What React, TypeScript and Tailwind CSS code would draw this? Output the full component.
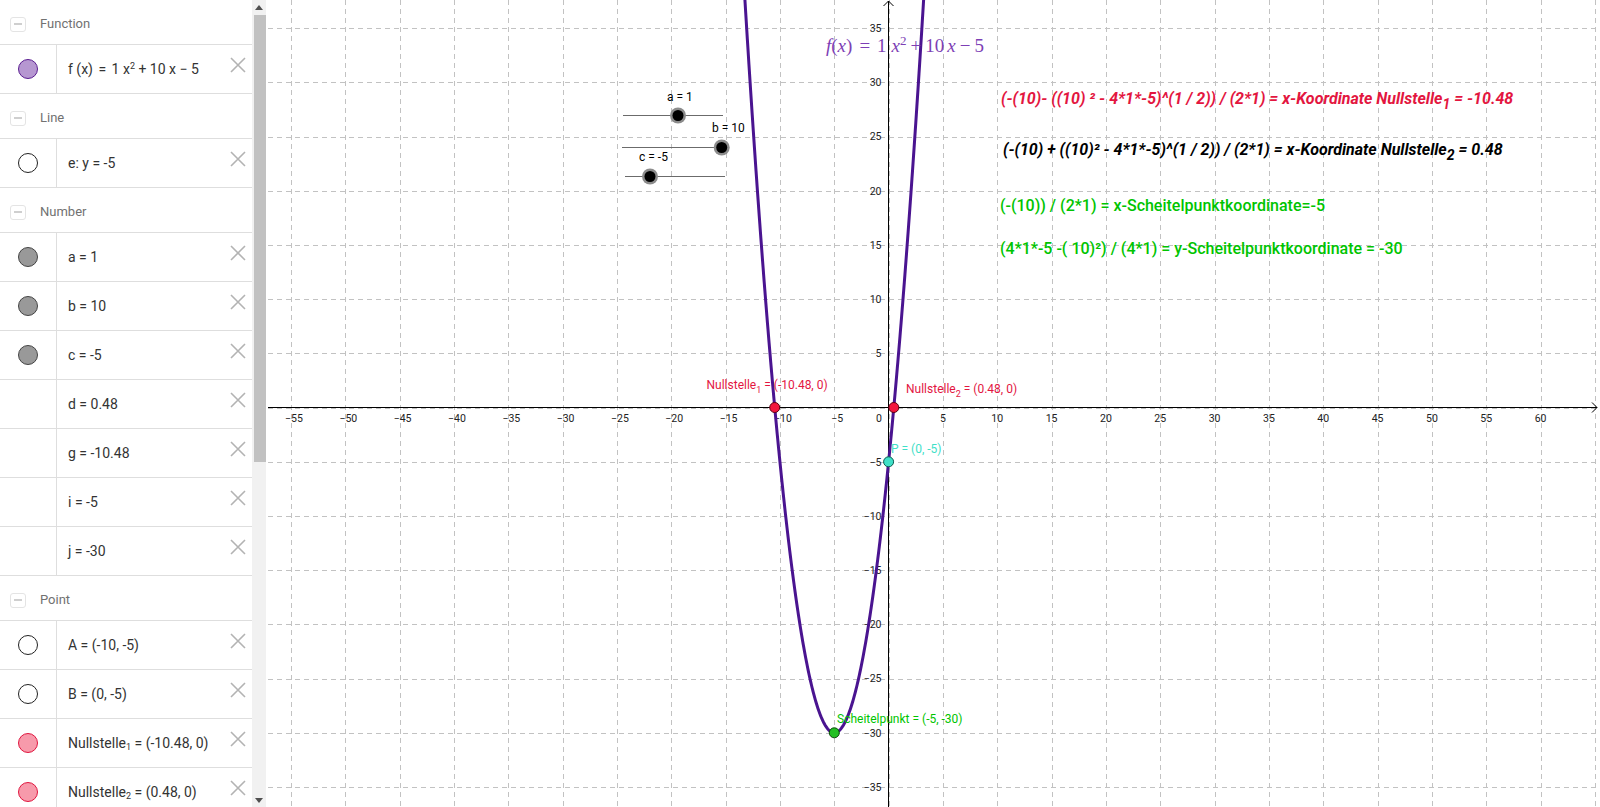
import React from "react";

// graph coordinate system (page pixels)
const OX = 888.6;
const OY = 407.6;
const SX = 10.866;
const SY = 10.84;
const px = (x: number) => OX + x * SX;
const py = (y: number) => OY - y * SY;

const minus = (n: number) => (n < 0 ? "\u2212" + Math.abs(n) : String(n));

type Dot = { fill: string; stroke: string } | null;
type Item =
  | { kind: "header"; label: string }
  | { kind: "row"; dot: Dot; content: React.ReactNode };

const purple = { fill: "#b697d1", stroke: "#5b1e91" };
const hollow = { fill: "#ffffff", stroke: "#222222" };
const gray = { fill: "#999999", stroke: "#444444" };
const pink = { fill: "#f79aab", stroke: "#e0163f" };

const items: Item[] = [
  { kind: "header", label: "Function" },
  {
    kind: "row",
    dot: purple,
    content: (
      <span>
        f (x) <span className="mx-[2px]">=</span> 1 x
        <sup className="text-[9px]">2</sup> <span>+</span> 10 x <span>−</span> 5
      </span>
    ),
  },
  { kind: "header", label: "Line" },
  { kind: "row", dot: hollow, content: "e: y = -5" },
  { kind: "header", label: "Number" },
  { kind: "row", dot: gray, content: "a = 1" },
  { kind: "row", dot: gray, content: "b = 10" },
  { kind: "row", dot: gray, content: "c = -5" },
  { kind: "row", dot: null, content: "d = 0.48" },
  { kind: "row", dot: null, content: "g = -10.48" },
  { kind: "row", dot: null, content: "i = -5" },
  { kind: "row", dot: null, content: "j = -30" },
  { kind: "header", label: "Point" },
  { kind: "row", dot: hollow, content: "A = (-10, -5)" },
  { kind: "row", dot: hollow, content: "B = (0, -5)" },
  {
    kind: "row",
    dot: pink,
    content: (
      <span>
        Nullstelle<sub className="text-[9px]">1</sub> = (-10.48, 0)
      </span>
    ),
  },
  {
    kind: "row",
    dot: pink,
    content: (
      <span>
        Nullstelle<sub className="text-[9px]">2</sub> = (0.48, 0)
      </span>
    ),
  },
];

const CloseIcon = () => (
  <svg width="16" height="16" viewBox="0 0 16 16">
    <path d="M1 1 L15 15 M15 1 L1 15" stroke="#b3b3b3" strokeWidth="1.6" fill="none" />
  </svg>
);

const Sidebar = () => (
  <aside className="flex h-full w-[268px] shrink-0">
    <div className="h-full w-[252px] overflow-hidden">
      {items.map((it, i) =>
        it.kind === "header" ? (
          <div key={i} className="flex h-[45px] items-center border-b border-[#dedede] pt-[4px] pl-[10px]">
            <span className="flex h-[15px] w-[16px] items-center justify-center rounded-[3px] border border-[#e4e4e4]">
              <span className="h-[2px] w-[8px] bg-[#cfcfcf]" />
            </span>
            <span className="ml-[14px] text-[13px] text-[#717171]">{it.label}</span>
          </div>
        ) : (
          <div key={i} className="flex h-[49px] border-b border-[#dedede]">
            <div className="flex w-[57px] shrink-0 items-center justify-center border-r border-[#dedede]">
              {it.dot && (
                <span
                  className="h-[20px] w-[20px] rounded-full border-[1.5px]"
                  style={{ background: it.dot.fill, borderColor: it.dot.stroke }}
                />
              )}
            </div>
            <div className="flex flex-1 items-center pl-[11px] text-[14px] text-[#333333]">
              {it.content}
            </div>
            <div className="mr-[6px] pt-[12px]">
              <CloseIcon />
            </div>
          </div>
        )
      )}
    </div>
    <div className="flex h-full w-[14px] flex-col bg-[#f1f1f1]">
      <div className="flex h-[15px] items-center justify-center">
        <svg width="8" height="5" viewBox="0 0 8 5">
          <path d="M0 5 L4 0 L8 5 Z" fill="#505050" />
        </svg>
      </div>
      <div className="ml-[2px] h-[447px] bg-[#c1c1c1]" />
      <div className="flex-1" />
      <div className="flex h-[14px] items-center justify-center">
        <svg width="8" height="5" viewBox="0 0 8 5">
          <path d="M0 0 L4 5 L8 0 Z" fill="#505050" />
        </svg>
      </div>
    </div>
    <div className="w-[2px]" />
  </aside>
);

const Graphics = () => {
  const vLines: number[] = [];
  for (let k = -12; k <= 13; k++) vLines.push(px(5 * k));
  const hLines: number[] = [];
  for (let k = -7; k <= 7; k++) hLines.push(py(5 * k));

  const pts: string[] = [];
  for (let x = -13.5; x <= 3.5; x += 0.05) {
    const y = x * x + 10 * x - 5;
    pts.push(`${px(x).toFixed(2)},${py(y).toFixed(2)}`);
  }

  const xLabels: number[] = [];
  for (let k = -11; k <= 12; k++) if (k !== 0) xLabels.push(5 * k);
  const yLabels: number[] = [];
  for (let k = -7; k <= 7; k++) if (k !== 0) yLabels.push(5 * k);

  const red = "#e3163f";
  const green = "#00c400";
  const cyan = "#3fe0c8";

  return (
    <div className="h-full flex-1">
      <svg width="1332" height="807" viewBox="268 0 1332 807" fontFamily="Roboto, sans-serif">
        {/* grid */}
        <g stroke="#c2c2c2" strokeWidth="1" strokeDasharray="5 4">
          {vLines.map((x, i) => (
            <line key={"v" + i} x1={Math.round(x) + 0.5} y1={0} x2={Math.round(x) + 0.5} y2={807} />
          ))}
          {hLines.map((y, i) => (
            <line key={"h" + i} x1={268} y1={Math.round(y) + 0.5} x2={1600} y2={Math.round(y) + 0.5} />
          ))}
        </g>

        {/* axes */}
        <g stroke="#000" strokeWidth="1" fill="none">
          <line x1={268} y1={407.5} x2={1597} y2={407.5} />
          <path d="M1592 402.5 L1597 407.5 L1592 412.5" />
          <line x1={888.5} y1={1} x2={888.5} y2={807} />
          <path d="M883.5 6 L888.5 1 L893.5 6" />
        </g>

        {/* axis labels */}
        <g fontSize="10.5" fill="#222">
          {xLabels.map((v) => (
            <text key={"xl" + v} x={px(v) + (v < 0 ? 3 : 0)} y={421.5} textAnchor="middle">
              {minus(v)}
            </text>
          ))}
          {yLabels.map((v) => (
            <text key={"yl" + v} x={881.5} y={py(v) + 3.8} textAnchor="end">
              {minus(v)}
            </text>
          ))}
          <text x={882} y={421.5} textAnchor="end">
            0
          </text>
        </g>

        {/* parabola */}
        <polyline points={pts.join(" ")} fill="none" stroke="#4a1490" strokeWidth="3" strokeLinejoin="round" />

        {/* function label */}
        <text x={826} y={52} fill="#7d3fb5" fontFamily="'Liberation Serif', serif" fontSize="19">
          <tspan fontStyle="italic">f</tspan>
          <tspan>(</tspan>
          <tspan fontStyle="italic">x</tspan>
          <tspan>)</tspan>
          <tspan dx="7">=</tspan>
          <tspan dx="7">1</tspan>
          <tspan dx="5" fontStyle="italic">x</tspan>
          <tspan dy="-7" fontSize="13">2</tspan>
          <tspan dy="7" dx="4">+</tspan>
          <tspan dx="4">10</tspan>
          <tspan dx="3" fontStyle="italic">x</tspan>
          <tspan dx="4">−</tspan>
          <tspan dx="4">5</tspan>
        </text>

        {/* sliders */}
        <g stroke="#6b6b6b" strokeWidth="1">
          <line x1={623} y1={115.5} x2={723} y2={115.5} />
          <line x1={622} y1={147.5} x2={722} y2={147.5} />
          <line x1={625} y1={176.5} x2={725} y2={176.5} />
        </g>
        {[
          [678, 115.5],
          [721.7, 147.5],
          [650, 176.5],
        ].map(([x, y], i) => (
          <g key={"k" + i}>
            <circle cx={x} cy={y} r={8} fill="#8c8c8c" />
            <circle cx={x} cy={y} r={5.5} fill="#000" />
          </g>
        ))}
        <g fontSize="12" fill="#000">
          <text x={667} y={100.5}>a = 1</text>
          <text x={712} y={132}>b = 10</text>
          <text x={639} y={160.5}>c = -5</text>
        </g>

        {/* points */}
        <circle cx={px(-10.48)} cy={407.5} r={5} fill="#f2163e" stroke="#5a0010" strokeWidth="1" />
        <circle cx={px(0.48)} cy={407.5} r={5} fill="#f2163e" stroke="#5a0010" strokeWidth="1" />
        <circle cx={px(0)} cy={py(-5)} r={5} fill={cyan} stroke="#0b5a50" strokeWidth="1" />
        <circle cx={px(-5)} cy={py(-30)} r={5} fill="#22c022" stroke="#0a4a0a" strokeWidth="1" />

        {/* point labels */}
        <g fontSize="12">
          <text x={706.5} y={389} fill={red}>
            Nullstelle<tspan dy="4" fontSize="9">1</tspan>
            <tspan dy="-4"> = (-10.48, 0)</tspan>
          </text>
          <text x={906} y={393} fill={red}>
            Nullstelle<tspan dy="4" fontSize="9">2</tspan>
            <tspan dy="-4"> = (0.48, 0)</tspan>
          </text>
          <text x={891} y={452.5} fill={cyan}>
            P = (0, -5)
          </text>
          <text x={837} y={722.5} fill={green}>
            Scheitelpunkt = (-5, -30)
          </text>
        </g>

        {/* formulas */}
        <g fontSize="16">
          <text x={1001} y={104} fill={red} fontStyle="italic" fontWeight="700">
            (-(10)- ((10) ² - 4*1*-5)^(1 / 2)) / (2*1) = x-Koordinate Nullstelle
            <tspan dy="5" fontSize="14">1</tspan>
            <tspan dy="-5"> = -10.48</tspan>
          </text>
          <text x={1003} y={155} fill="#000" fontStyle="italic" fontWeight="700">
            (-(10) + ((10)² - 4*1*-5)^(1 / 2)) / (2*1) = x-Koordinate Nullstelle
            <tspan dy="5" fontSize="14">2</tspan>
            <tspan dy="-5"> = 0.48</tspan>
          </text>
          <text x={1000} y={211} fill={green} fontWeight="500">
            (-(10)) / (2*1) = x-Scheitelpunktkoordinate=-5
          </text>
          <text x={1000} y={254} fill={green} fontWeight="500">
            (4*1*-5 -( 10)²) / (4*1) = y-Scheitelpunktkoordinate = -30
          </text>
        </g>
      </svg>
    </div>
  );
}

export default function App() {
  return (
    <div className="flex h-[807px] w-[1600px] overflow-hidden bg-white font-['Roboto',sans-serif]">
      <Sidebar />
      <Graphics />
    </div>
  );
}
